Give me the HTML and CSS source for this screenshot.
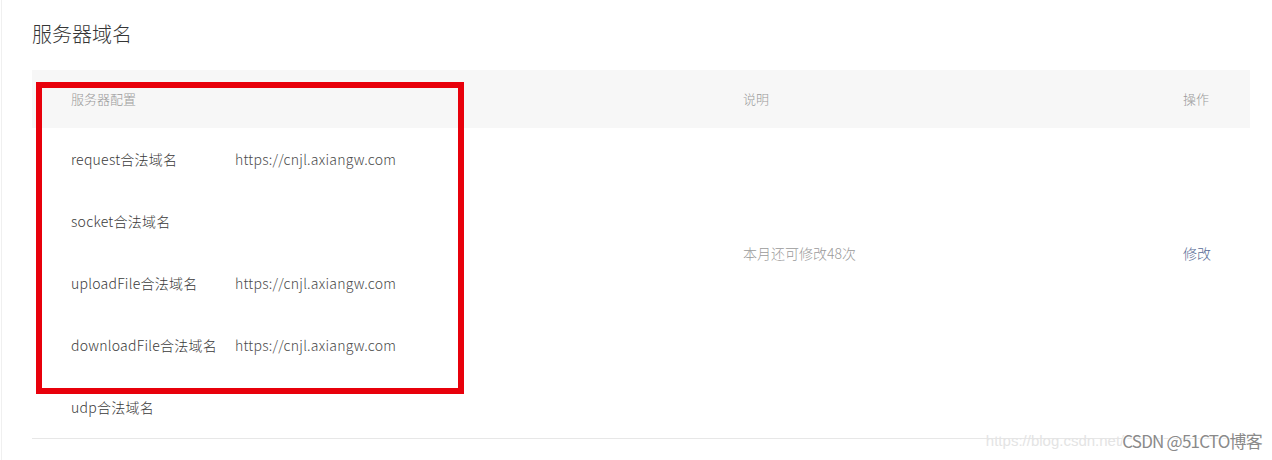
FILE: index.html
```html
<!DOCTYPE html>
<html lang="zh-CN">
<head>
<meta charset="utf-8">
<title>服务器域名</title>
<link rel="stylesheet" href="styles.css">
</head>
<body>
<div class="page">
  <h2 class="title">服务器域名</h2>
  <div class="table">
    <div class="thead">
      <div class="th">服务器配置</div>
      <div class="th">说明</div>
      <div class="th">操作</div>
    </div>
    <div class="tbody">
      <div class="td config">
        <div class="item"><span class="label">request合法域名</span><span class="url">https://cnjl.axiangw.com</span></div>
        <div class="item"><span class="label">socket合法域名</span><span class="url"></span></div>
        <div class="item"><span class="label">uploadFile合法域名</span><span class="url">https://cnjl.axiangw.com</span></div>
        <div class="item"><span class="label">downloadFile合法域名</span><span class="url">https://cnjl.axiangw.com</span></div>
        <div class="item"><span class="label">udp合法域名</span><span class="url"></span></div>
      </div>
      <div class="td desc">本月还可修改48次</div>
      <div class="td op"><a class="link" href="#">修改</a></div>
    </div>
  </div>
  <div class="highlight"></div>
  <div class="watermark"><span class="wm-url">https://blog.csdn.net/</span><span class="wm-name">CSDN @51CTO博客</span></div>
</div>
</body>
</html>
```
FILE: styles.css
```css
html, body {
  margin: 0;
  padding: 0;
  background: #fff;
}
body {
  font-family: "Noto Sans CJK SC", "Noto Sans", sans-serif;
  font-weight: 300;
  color: #3a3a3a;
  width: 1272px;
  height: 460px;
  overflow: hidden;
}
.page {
  position: relative;
  height: 460px;
  box-sizing: border-box;
  margin-left: 1px;
  border-left: 1px solid #f0f0f0;
  padding: 20px 0 0 30px;
}
.title {
  margin: 0;
  font-size: 20px;
  font-weight: 300;
  line-height: 28px;
  color: #353535;
}
.table {
  margin-top: 22px;
  width: 1218px;
}
.thead, .tbody {
  display: grid;
  grid-template-columns: 672px 440px 106px;
}
.thead {
  height: 58px;
  background: #f7f7f7;
  align-items: center;
}
.th {
  padding-left: 39px;
  font-size: 13px;
  color: #9a9a9a;
  line-height: 20px;
}
.tbody {
  border-bottom: 1px solid #e7e7e7;
}
.config {
  display: flex;
  flex-direction: column;
}
.item {
  height: 62px;
  display: flex;
  align-items: center;
  padding-left: 39px;
  font-size: 14px;
  letter-spacing: 0.25px;
}
.label {
  width: 164px;
  flex: none;
}
.url {
  color: #4a4a4a;
}
.desc, .op {
  padding: 114px 0 0 39px;
  font-size: 14px;
  line-height: 22px;
}
.desc {
  color: #9a9a9a;
}
.link {
  color: #576b95;
  text-decoration: none;
}
.highlight {
  position: absolute;
  left: 34px;
  top: 82px;
  width: 416px;
  height: 300px;
  border: 6px solid #e8000b;
}
.watermark {
  position: absolute;
  right: 10px;
  top: 428px;
  display: flex;
  align-items: center;
  white-space: nowrap;
}
.wm-url {
  font-family: "Liberation Sans", sans-serif;
  font-size: 15px;
  color: #e4e4e4;
  margin-right: -2px;
}
.wm-name {
  font-size: 17px;
  font-weight: 400;
  color: #8a8a8a;
  letter-spacing: -0.8px;
  text-shadow: 1px 1px 0 #fff, -1px 0 0 #fff;
}
```
